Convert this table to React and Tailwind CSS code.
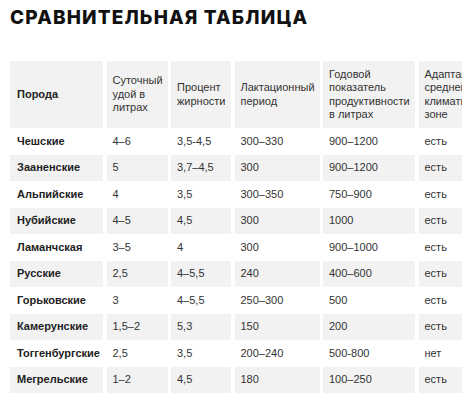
import React from "react";

const rows = [
  ["Чешские", "4–6", "3,5-4,5", "300–330", "900–1200", "есть"],
  ["Зааненские", "5", "3,7–4,5", "300", "900–1200", "есть"],
  ["Альпийские", "4", "3,5", "300–350", "750–900", "есть"],
  ["Нубийские", "4–5", "4,5", "300", "1000", "есть"],
  ["Ламанчская", "3–5", "4", "300", "900–1000", "есть"],
  ["Русские", "2,5", "4–5,5", "240", "400–600", "есть"],
  ["Горьковские", "3", "4–5,5", "250–300", "500", "есть"],
  ["Камерунские", "1,5–2", "5,3", "150", "200", "есть"],
  ["Тоггенбургские", "2,5", "3,5", "200–240", "500-800", "нет"],
  ["Мегрельские", "1–2", "4,5", "180", "100–250", "есть"],
];

const headers = [
  "Суточный удой в литрах",
  "Процент жирности",
  "Лактационный период",
  "Годовой показатель продуктивности в литрах",
  "Адаптация к средней климатической зоне",
];

const App = () => {
  return (
    <div className="w-[472px] h-[400px] bg-white overflow-hidden font-['Liberation_Sans',Arial,sans-serif] text-[#333]">
      <h2 className="pl-[10px] pt-[8px] text-[19px] leading-[20px] font-extrabold tracking-[0.06em] text-[#111] font-['Inter',sans-serif]">
        СРАВНИТЕЛЬНАЯ ТАБЛИЦА
      </h2>

      <div className="ml-[10px] mt-[33px] w-[452px] overflow-hidden">
        <div className="grid w-[520px] grid-cols-[93px_61px_60px_85px_92px_90px] gap-x-[3.5px] text-[11px] leading-[13.5px]">
          <div className="h-[67px] bg-[#f2f2f2] flex items-center pl-[7px] font-bold text-[#222]">
            Порода
          </div>
          {headers.map((h) => (
            <div
              key={h}
              className="h-[67px] bg-[#f2f2f2] flex items-center pl-[6px] pr-[3px]"
            >
              {h}
            </div>
          ))}

          {rows.map((r, i) =>
            r.map((c, j) => (
              <div
                key={i + "-" + j}
                className={
                  "h-[26.5px] flex items-center " +
                  (i % 2 === 1 ? "bg-[#f2f2f2] " : "bg-white ") +
                  (j === 0 ? "pl-[7px] font-bold text-[#222]" : "pl-[6px]")
                }
              >
                {c}
              </div>
            ))
          )}
        </div>
      </div>
    </div>
  );
};

export default App;
